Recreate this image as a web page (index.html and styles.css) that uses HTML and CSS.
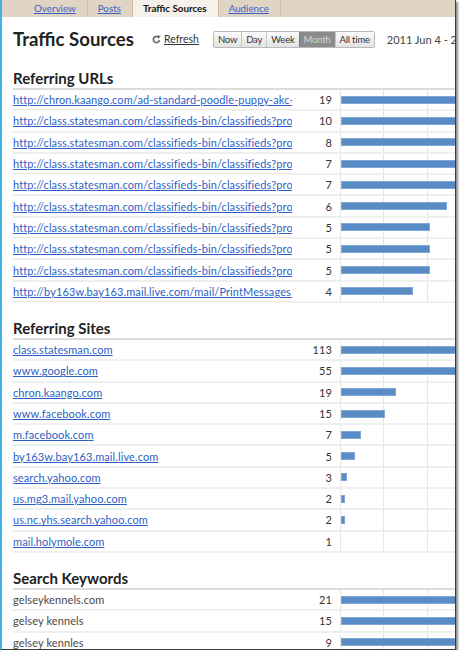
FILE: index.html
```html
<!DOCTYPE html>
<html>
<head>
<meta charset="utf-8">
<link rel="stylesheet" href="styles.css">
</head>
<body>
<div class="frame">
  <nav class="tabs">
    <a class="tab">Overview</a>
    <a class="tab">Posts</a>
    <span class="tab active">Traffic Sources</span>
    <a class="tab">Audience</a>
  </nav>
  <main class="content">
    <div class="titlebar">
      <h1>Traffic Sources</h1>
      <a class="refresh"><svg class="refresh-icon" width="9" height="9" viewBox="0 0 10 10"><path d="M8.3 5.6 A3.4 3.4 0 1 1 6.6 2.1" fill="none" stroke="#6a6a6a" stroke-width="1.9"/><path d="M5.4 0.2 L9.6 0.9 L7.4 4.4 Z" fill="#6a6a6a"/></svg><span>Refresh</span></a>
      <div class="btngroup">
        <span class="btn">Now</span><span class="btn">Day</span><span class="btn">Week</span><span class="btn active">Month</span><span class="btn">All time</span>
      </div>
      <span class="daterange">2011 Jun 4 - 20</span>
    </div>

    <section class="stats first">
      <h2>Referring URLs</h2>
      <div class="row"><a class="label">http://chron.kaango.com/ad-standard-poodle-puppy-akc-bl</a><span class="count">19</span><span class="barcell"><span class="bar" style="width:342px"></span></span></div>
      <div class="row"><a class="label">http://class.statesman.com/classifieds-bin/classifieds?pro</a><span class="count">10</span><span class="barcell"><span class="bar" style="width:180px"></span></span></div>
      <div class="row"><a class="label">http://class.statesman.com/classifieds-bin/classifieds?pro</a><span class="count">8</span><span class="barcell"><span class="bar" style="width:144px"></span></span></div>
      <div class="row"><a class="label">http://class.statesman.com/classifieds-bin/classifieds?pro</a><span class="count">7</span><span class="barcell"><span class="bar" style="width:126px"></span></span></div>
      <div class="row"><a class="label">http://class.statesman.com/classifieds-bin/classifieds?pro</a><span class="count">7</span><span class="barcell"><span class="bar" style="width:126px"></span></span></div>
      <div class="row"><a class="label">http://class.statesman.com/classifieds-bin/classifieds?pro</a><span class="count">6</span><span class="barcell"><span class="bar" style="width:106px"></span></span></div>
      <div class="row"><a class="label">http://class.statesman.com/classifieds-bin/classifieds?pro</a><span class="count">5</span><span class="barcell"><span class="bar" style="width:89px"></span></span></div>
      <div class="row"><a class="label">http://class.statesman.com/classifieds-bin/classifieds?pro</a><span class="count">5</span><span class="barcell"><span class="bar" style="width:89px"></span></span></div>
      <div class="row"><a class="label">http://class.statesman.com/classifieds-bin/classifieds?pro</a><span class="count">5</span><span class="barcell"><span class="bar" style="width:89px"></span></span></div>
      <div class="row"><a class="label">http://by163w.bay163.mail.live.com/mail/PrintMessages.a</a><span class="count">4</span><span class="barcell"><span class="bar" style="width:72px"></span></span></div>
    </section>

    <section class="stats">
      <h2>Referring Sites</h2>
      <div class="row"><a class="label">class.statesman.com</a><span class="count">113</span><span class="barcell"><span class="bar" style="width:328px"></span></span></div>
      <div class="row"><a class="label">www.google.com</a><span class="count">55</span><span class="barcell"><span class="bar" style="width:160px"></span></span></div>
      <div class="row"><a class="label">chron.kaango.com</a><span class="count">19</span><span class="barcell"><span class="bar" style="width:55px"></span></span></div>
      <div class="row"><a class="label">www.facebook.com</a><span class="count">15</span><span class="barcell"><span class="bar" style="width:44px"></span></span></div>
      <div class="row"><a class="label">m.facebook.com</a><span class="count">7</span><span class="barcell"><span class="bar" style="width:20px"></span></span></div>
      <div class="row"><a class="label">by163w.bay163.mail.live.com</a><span class="count">5</span><span class="barcell"><span class="bar" style="width:14px"></span></span></div>
      <div class="row"><a class="label">search.yahoo.com</a><span class="count">3</span><span class="barcell"><span class="bar" style="width:6px"></span></span></div>
      <div class="row"><a class="label">us.mg3.mail.yahoo.com</a><span class="count">2</span><span class="barcell"><span class="bar" style="width:4px"></span></span></div>
      <div class="row"><a class="label">us.nc.yhs.search.yahoo.com</a><span class="count">2</span><span class="barcell"><span class="bar" style="width:4px"></span></span></div>
      <div class="row"><a class="label">mail.holymole.com</a><span class="count">1</span><span class="barcell"></span></div>
    </section>

    <section class="stats">
      <h2>Search Keywords</h2>
      <div class="row"><span class="label plain">gelseykennels.com</span><span class="count">21</span><span class="barcell"><span class="bar" style="width:400px"></span></span></div>
      <div class="row"><span class="label plain">gelsey kennels</span><span class="count">15</span><span class="barcell"><span class="bar" style="width:285px"></span></span></div>
      <div class="row"><span class="label plain">gelsey kennles</span><span class="count">9</span><span class="barcell"><span class="bar" style="width:171px"></span></span></div>
    </section>
  </main>
</div>
</body>
</html>
```
FILE: styles.css
```css
html, body {
  margin: 0;
  padding: 0;
  background: #ffffff;
}

body {
  font-family: Lato, "Open Sans", sans-serif;
}

.frame {
  width: 453px;
  height: 649px;
  border-left: 2px solid #45b0e3;
  border-right: 1px solid #3c3c3c;
  border-bottom: 1px solid #3c3c3c;
  box-shadow: 2px 2px 2px rgba(0, 0, 0, 0.45);
  overflow: hidden;
  background: #ffffff;
}

/* Tabs */
.tabs {
  display: flex;
  height: 17px;
  background: #e0d5c4;
  padding-left: 22px;
}

.tab {
  padding: 0 11px 0 10px;
  border-right: 1px solid #cbbca6;
  font-size: 9.8px;
  line-height: 17px;
  color: #3a5fc8;
  text-decoration: underline;
  white-space: nowrap;
}

.tab.active {
  background: #f6f1ea;
  color: #111111;
  text-decoration: none;
  font-weight: 700;
}

/* Content */
.content {
  padding-left: 11px;
}

.titlebar {
  display: flex;
  align-items: center;
  height: 24px;
  margin-top: 10px;
  white-space: nowrap;
  width: 620px;
}

.titlebar > * {
  flex-shrink: 0;
}

.titlebar h1 {
  margin: 0;
  font-size: 18.6px;
  font-weight: 700;
  color: #222222;
  line-height: 24px;
}

.refresh {
  margin-left: 18px;
  display: flex;
  align-items: center;
  gap: 3px;
  font-size: 10.5px;
  color: #333333;
}

.refresh span {
  text-decoration: underline;
}

.btngroup {
  margin-left: 14px;
  display: flex;
  height: 15px;
  border: 1px solid #b9b9b9;
  border-radius: 2px;
  overflow: hidden;
}

.btn {
  flex-shrink: 0;
  font-size: 9.5px;
  letter-spacing: -0.2px;
  line-height: 15px;
  padding: 0 4px;
  border-left: 1px solid #c6c6c6;
  background: linear-gradient(#fbfbfb, #e3e3e3);
  color: #333333;
}

.btn:first-child {
  border-left: 0;
}

.btn.active {
  background: #8b8b8b;
  color: #d4d4d4;
  border-left-color: #7a7a7a;
}

.daterange {
  margin-left: 12px;
  font-size: 11px;
  color: #444444;
}

/* Stats tables */
.stats {
  width: 620px;
  margin-top: 15px;
}

.stats.first {
  margin-top: 17px;
}

.stats h2 {
  margin: 0;
  height: 20px;
  line-height: 20px;
  font-size: 15px;
  font-weight: 700;
  color: #222222;
  border-bottom: 2px solid #dcdcdc;
}

.row {
  display: grid;
  grid-template-columns: 279px 40px 8px 1fr;
  height: 21.3px;
  box-sizing: border-box;
  border-bottom: 2px solid #efefef;
  align-items: center;
  font-size: 11px;
  letter-spacing: 0.1px;
}

.label {
  overflow: hidden;
  white-space: nowrap;
  color: #2d5fc4;
  text-decoration: underline;
}

.label.plain {
  color: #4a4a4a;
  text-decoration: none;
}

.count {
  grid-column: 2;
  text-align: right;
  color: #333333;
}

.barcell {
  grid-column: 4;
  align-self: stretch;
  display: flex;
  align-items: center;
  background-image: repeating-linear-gradient(to right, #e6e6e6 0, #e6e6e6 1px, transparent 1px, transparent 43.5px);
}

.bar {
  height: 8px;
  margin-left: 1px;
  background: #598bc5;
  box-shadow: inset 0 0 0 1px #7fa7d7;
}
```
